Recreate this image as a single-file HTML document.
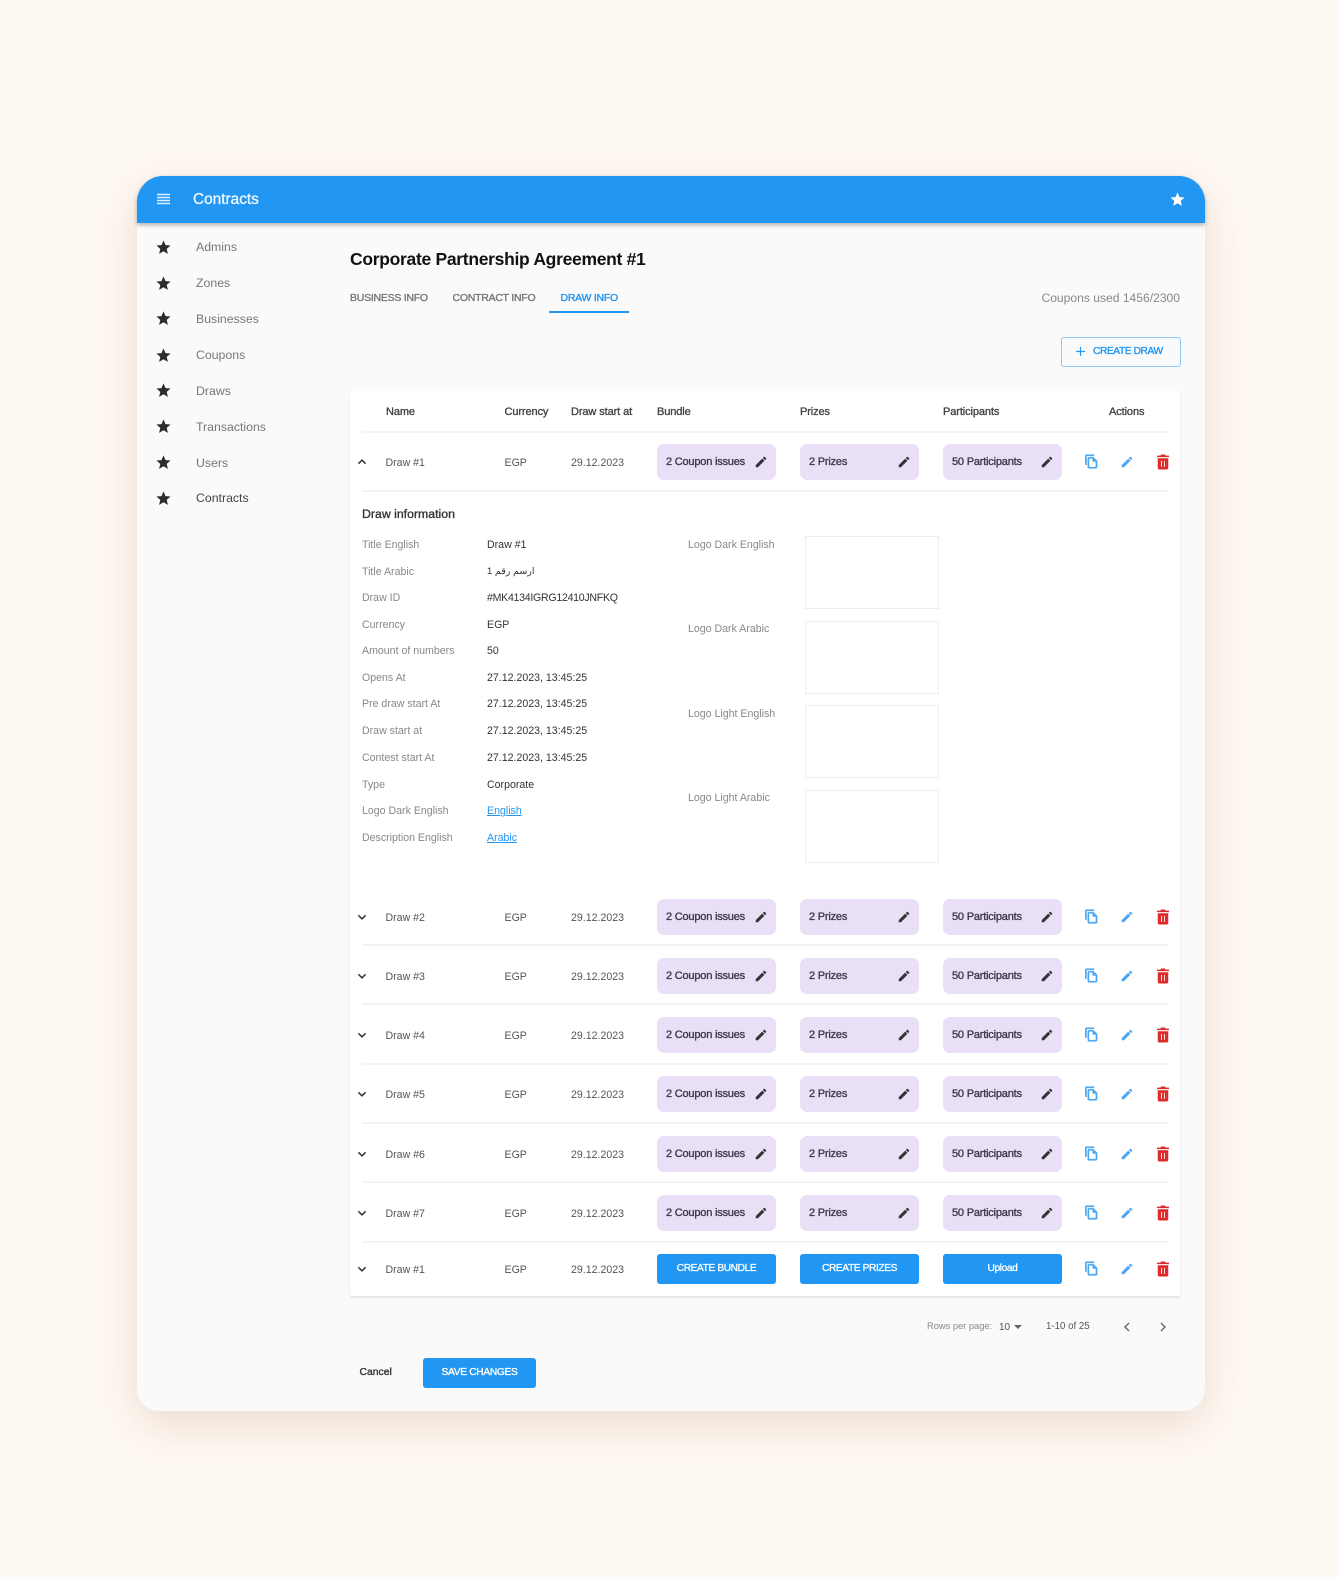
<!DOCTYPE html>
<html><head><meta charset="utf-8"><title>Contracts</title>
<style>
*{box-sizing:border-box}
html,body{margin:0;padding:0}
body{width:1340px;height:1577px;background:#fff9f4;position:relative;overflow:hidden;font-family:"Liberation Sans","DejaVu Sans",sans-serif;color:#424242}
.a,.r>*,.w>*{position:absolute;white-space:nowrap}
.win{position:absolute;left:137px;top:176px;width:1068px;height:1235px;background:#fafafa;border-radius:26px 26px 22px 22px;box-shadow:0 14px 46px rgba(150,95,45,.19)}
.bar{position:absolute;left:137px;top:176px;width:1068px;height:47px;background:#2196f3;border-radius:26px 26px 0 0;box-shadow:0 2px 4px rgba(0,0,0,.3)}
.nav{font-size:12.3px;line-height:16px;color:#777}
.m{-webkit-text-stroke:.35px currentColor}
.tab{font-size:10.5px;line-height:14px;-webkit-text-stroke:.35px currentColor;color:#777;letter-spacing:-.25px;top:291px}
.tbl{position:absolute;left:350px;top:391px;width:830px;height:905px;background:#fff;border-radius:2px;box-shadow:0 2px 2px rgba(0,0,0,.09)}
.th{font-size:11px;line-height:14px;letter-spacing:-.1px;-webkit-text-stroke:.35px currentColor;color:#444;top:405px}
.ln{position:absolute;left:362px;width:807px;height:2px;background:#f3f3f3}
.r{position:absolute;left:0;width:1340px;height:36px}
.t{font-size:10.6px;line-height:36px;top:1px;color:#555}
.c{top:0;height:36px;width:119px;background:#e9dff7;border-radius:7px;font-size:11px;letter-spacing:-.2px;-webkit-text-stroke:.35px currentColor;line-height:37px;color:#3c3a4c;padding-left:9px}
.b{top:3px;height:30px;width:119px;background:#2196f3;border-radius:3px;font-size:10.2px;letter-spacing:-.4px;-webkit-text-stroke:.3px currentColor;line-height:30px;color:#fff;text-align:center}
svg{display:block}
.l{font-size:10.6px;line-height:14px;color:#888}
.v{font-size:10.6px;line-height:14px;color:#333}
.box{position:absolute;left:805px;width:134px;height:73px;background:#fff;border:1px solid #ededed}
a{color:#2196f3;text-decoration:underline}
</style></head><body>
<svg width="0" height="0" style="position:absolute"><defs>
<symbol id="star" viewBox="0 0 24 24"><path d="M12 17.27L18.18 21l-1.64-7.03L22 9.24l-7.19-.61L12 2 9.19 8.63 2 9.24l5.46 4.73L5.82 21z"/></symbol>
<symbol id="pen" viewBox="0 0 24 24"><path d="M3 17.25V21h3.75L17.81 9.94l-3.75-3.75L3 17.25zM20.71 7.04a.996.996 0 0 0 0-1.41l-2.34-2.34a.996.996 0 0 0-1.41 0l-1.83 1.83 3.75 3.75 1.83-1.83z"/></symbol>
<symbol id="copy" viewBox="0 0 24 24"><path stroke="#4aa6f5" stroke-width=".7" d="M16 1H4c-1.1 0-2 .9-2 2v14h2V3h12V1zm-1 4H8c-1.1 0-1.99.9-1.99 2L6 21c0 1.1.89 2 1.99 2H19c1.1 0 2-.9 2-2V11l-6-6zM8 21V7h6v5h5v9H8z"/></symbol>
<symbol id="del" viewBox="0 0 24 24"><path fill-rule="evenodd" d="M5 7h14v13c0 1.1-.9 2-2 2H7c-1.100 0-2-.9-2-2V7zm4.500 3.500v8h1.200v-8H9.500zm3.800 0v8h1.200v-8h-1.200zM20 3.500h-4.500l-1-1.500h-5l-1 1.500H4v2h16v-2z"/></symbol>
<symbol id="down" viewBox="0 0 12 12"><path d="M2.400 4.300L6 7.800l3.600-3.500" fill="none" stroke="#333" stroke-width="1.500"/></symbol>
<symbol id="up" viewBox="0 0 12 12"><path d="M2.400 7.700L6 4.200l3.600 3.500" fill="none" stroke="#333" stroke-width="1.500"/></symbol>
</defs></svg>

<div class="win"></div>
<div class="bar"></div>
<svg class="a" style="left:157px;top:193px" width="13" height="13" viewBox="0 0 13 13"><path d="M0 1.500h13M0 4.500h13M0 7.500h13M0 10.500h13" stroke="#fff" stroke-opacity=".85" stroke-width="1.500"/></svg>
<div class="a m" style="left:193px;top:191px;font-size:15.400px;line-height:18px;color:#fff;opacity:.92">Contracts</div>
<svg class="a" style="left:1169px;top:191px;fill:#fff" width="17" height="17"><use href="#star"/></svg>

<svg class="a" style="left:155px;top:239px;fill:#2c2c2c" width="17" height="17"><use href="#star"/></svg><div class="a nav" style="left:196px;top:239px">Admins</div>
<svg class="a" style="left:155px;top:275px;fill:#2c2c2c" width="17" height="17"><use href="#star"/></svg><div class="a nav" style="left:196px;top:275px">Zones</div>
<svg class="a" style="left:155px;top:310px;fill:#2c2c2c" width="17" height="17"><use href="#star"/></svg><div class="a nav" style="left:196px;top:311px">Businesses</div>
<svg class="a" style="left:155px;top:346.500px;fill:#2c2c2c" width="17" height="17"><use href="#star"/></svg><div class="a nav" style="left:196px;top:347px">Coupons</div>
<svg class="a" style="left:155px;top:382px;fill:#2c2c2c" width="17" height="17"><use href="#star"/></svg><div class="a nav" style="left:196px;top:383px">Draws</div>
<svg class="a" style="left:155px;top:418px;fill:#2c2c2c" width="17" height="17"><use href="#star"/></svg><div class="a nav" style="left:196px;top:419px">Transactions</div>
<svg class="a" style="left:155px;top:454px;fill:#2c2c2c" width="17" height="17"><use href="#star"/></svg><div class="a nav" style="left:196px;top:455px">Users</div>
<svg class="a" style="left:155px;top:489.500px;fill:#2c2c2c" width="17" height="17"><use href="#star"/></svg><div class="a nav" style="left:196px;top:490px;color:#444">Contracts</div>

<div class="a" style="left:350px;top:248px;font-size:17.500px;letter-spacing:-.3px;line-height:22px;font-weight:bold;color:#111">Corporate Partnership Agreement #1</div>
<div class="w">
<div class="tab" style="left:350px">BUSINESS INFO</div>
<div class="tab" style="left:452.500px">CONTRACT INFO</div>
<div class="tab" style="left:560.500px;color:#2196f3">DRAW INFO</div>
<div style="left:549px;top:311px;width:80px;height:2px;background:#2196f3"></div>
<div style="right:160px;top:290px;font-size:12.100px;line-height:16px;color:#888">Coupons used 1456/2300</div>
<div style="left:1061px;top:337px;width:120px;height:30px;border:1px solid #8cc8f8;border-radius:3px"></div>
<svg style="left:1075px;top:346px" width="11" height="11" viewBox="0 0 11 11"><path d="M5.500 1v9M1 5.500h9" stroke="#2196f3" stroke-width="1.200"/></svg>
<div class="m" style="left:1093px;top:345px;font-size:10.200px;letter-spacing:-.4px;line-height:14px;color:#2196f3">CREATE DRAW</div>
</div>

<div class="tbl"></div>
<div class="w">
<div class="th" style="left:386px">Name</div>
<div class="th" style="left:504.500px">Currency</div>
<div class="th" style="left:571px">Draw start at</div>
<div class="th" style="left:657px">Bundle</div>
<div class="th" style="left:800px">Prizes</div>
<div class="th" style="left:943px">Participants</div>
<div class="th" style="left:1109px">Actions</div>
</div>
<div class="ln" style="top:431px"></div>
<div class="ln" style="top:490px"></div>
<div class="ln" style="top:944px"></div>
<div class="ln" style="top:1003px"></div>
<div class="ln" style="top:1063px"></div>
<div class="ln" style="top:1122px"></div>
<div class="ln" style="top:1181px"></div>
<div class="ln" style="top:1241px"></div>

<div class="r" style="top:444px"><svg style="left:356px;top:12px" width="12" height="12"><use href="#up"/></svg><div class="t" style="left:385.500px">Draw #1</div><div class="t" style="left:504.500px">EGP</div><div class="t" style="left:571px">29.12.2023</div><div class="c" style="left:657px">2 Coupon issues<svg style="position:absolute;left:96.500px;top:11px;fill:#333" width="14" height="14"><use href="#pen"/></svg></div><div class="c" style="left:800px">2 Prizes<svg style="position:absolute;left:96.500px;top:11px;fill:#333" width="14" height="14"><use href="#pen"/></svg></div><div class="c" style="left:943px">50 Participants<svg style="position:absolute;left:96.500px;top:11px;fill:#333" width="14" height="14"><use href="#pen"/></svg></div><svg style="left:1084px;top:10px;fill:#4aa6f5" width="15" height="15"><use href="#copy"/></svg><svg style="left:1120px;top:11px;fill:#4aa6f5" width="14" height="14"><use href="#pen"/></svg><svg style="left:1154px;top:9px;fill:#dc2b2b" width="18" height="18"><use href="#del"/></svg></div>

<div class="a m" style="left:362px;top:506px;font-size:12.300px;line-height:16px;color:#333">Draw information</div>
<div class="w">
<div class="l" style="left:362px;top:538px">Title English</div><div class="v" style="left:487px;top:538px">Draw #1</div>
<div class="l" style="left:362px;top:565px">Title Arabic</div><div class="v" style="left:487px;top:565px;font-size:9.500px" dir="rtl">ارسم رقم 1</div>
<div class="l" style="left:362px;top:591px">Draw ID</div><div class="v" style="left:487px;top:591px;letter-spacing:-.28px">#MK4134IGRG12410JNFKQ</div>
<div class="l" style="left:362px;top:618px">Currency</div><div class="v" style="left:487px;top:618px">EGP</div>
<div class="l" style="left:362px;top:644px">Amount of numbers</div><div class="v" style="left:487px;top:644px">50</div>
<div class="l" style="left:362px;top:671px">Opens At</div><div class="v" style="left:487px;top:671px">27.12.2023, 13:45:25</div>
<div class="l" style="left:362px;top:697px">Pre draw start At</div><div class="v" style="left:487px;top:697px">27.12.2023, 13:45:25</div>
<div class="l" style="left:362px;top:724px">Draw start at</div><div class="v" style="left:487px;top:724px">27.12.2023, 13:45:25</div>
<div class="l" style="left:362px;top:751px">Contest start At</div><div class="v" style="left:487px;top:751px">27.12.2023, 13:45:25</div>
<div class="l" style="left:362px;top:778px">Type</div><div class="v" style="left:487px;top:778px">Corporate</div>
<div class="l" style="left:362px;top:804px">Logo Dark English</div><div class="v" style="left:487px;top:804px"><a>English</a></div>
<div class="l" style="left:362px;top:831px">Description English</div><div class="v" style="left:487px;top:831px"><a>Arabic</a></div>
<div class="l" style="left:688px;top:538px">Logo Dark English</div>
<div class="l" style="left:688px;top:622px">Logo Dark Arabic</div>
<div class="l" style="left:688px;top:707px">Logo Light English</div>
<div class="l" style="left:688px;top:791px">Logo Light Arabic</div>
</div>
<div class="box" style="top:536px"></div>
<div class="box" style="top:621px"></div>
<div class="box" style="top:705px"></div>
<div class="box" style="top:790px"></div>

<div class="r" style="top:899px"><svg style="left:356px;top:12px" width="12" height="12"><use href="#down"/></svg><div class="t" style="left:385.500px">Draw #2</div><div class="t" style="left:504.500px">EGP</div><div class="t" style="left:571px">29.12.2023</div><div class="c" style="left:657px">2 Coupon issues<svg style="position:absolute;left:96.500px;top:11px;fill:#333" width="14" height="14"><use href="#pen"/></svg></div><div class="c" style="left:800px">2 Prizes<svg style="position:absolute;left:96.500px;top:11px;fill:#333" width="14" height="14"><use href="#pen"/></svg></div><div class="c" style="left:943px">50 Participants<svg style="position:absolute;left:96.500px;top:11px;fill:#333" width="14" height="14"><use href="#pen"/></svg></div><svg style="left:1084px;top:10px;fill:#4aa6f5" width="15" height="15"><use href="#copy"/></svg><svg style="left:1120px;top:11px;fill:#4aa6f5" width="14" height="14"><use href="#pen"/></svg><svg style="left:1154px;top:9px;fill:#dc2b2b" width="18" height="18"><use href="#del"/></svg></div>

<div class="r" style="top:958px"><svg style="left:356px;top:12px" width="12" height="12"><use href="#down"/></svg><div class="t" style="left:385.500px">Draw #3</div><div class="t" style="left:504.500px">EGP</div><div class="t" style="left:571px">29.12.2023</div><div class="c" style="left:657px">2 Coupon issues<svg style="position:absolute;left:96.500px;top:11px;fill:#333" width="14" height="14"><use href="#pen"/></svg></div><div class="c" style="left:800px">2 Prizes<svg style="position:absolute;left:96.500px;top:11px;fill:#333" width="14" height="14"><use href="#pen"/></svg></div><div class="c" style="left:943px">50 Participants<svg style="position:absolute;left:96.500px;top:11px;fill:#333" width="14" height="14"><use href="#pen"/></svg></div><svg style="left:1084px;top:10px;fill:#4aa6f5" width="15" height="15"><use href="#copy"/></svg><svg style="left:1120px;top:11px;fill:#4aa6f5" width="14" height="14"><use href="#pen"/></svg><svg style="left:1154px;top:9px;fill:#dc2b2b" width="18" height="18"><use href="#del"/></svg></div>

<div class="r" style="top:1017px"><svg style="left:356px;top:12px" width="12" height="12"><use href="#down"/></svg><div class="t" style="left:385.500px">Draw #4</div><div class="t" style="left:504.500px">EGP</div><div class="t" style="left:571px">29.12.2023</div><div class="c" style="left:657px">2 Coupon issues<svg style="position:absolute;left:96.500px;top:11px;fill:#333" width="14" height="14"><use href="#pen"/></svg></div><div class="c" style="left:800px">2 Prizes<svg style="position:absolute;left:96.500px;top:11px;fill:#333" width="14" height="14"><use href="#pen"/></svg></div><div class="c" style="left:943px">50 Participants<svg style="position:absolute;left:96.500px;top:11px;fill:#333" width="14" height="14"><use href="#pen"/></svg></div><svg style="left:1084px;top:10px;fill:#4aa6f5" width="15" height="15"><use href="#copy"/></svg><svg style="left:1120px;top:11px;fill:#4aa6f5" width="14" height="14"><use href="#pen"/></svg><svg style="left:1154px;top:9px;fill:#dc2b2b" width="18" height="18"><use href="#del"/></svg></div>

<div class="r" style="top:1076px"><svg style="left:356px;top:12px" width="12" height="12"><use href="#down"/></svg><div class="t" style="left:385.500px">Draw #5</div><div class="t" style="left:504.500px">EGP</div><div class="t" style="left:571px">29.12.2023</div><div class="c" style="left:657px">2 Coupon issues<svg style="position:absolute;left:96.500px;top:11px;fill:#333" width="14" height="14"><use href="#pen"/></svg></div><div class="c" style="left:800px">2 Prizes<svg style="position:absolute;left:96.500px;top:11px;fill:#333" width="14" height="14"><use href="#pen"/></svg></div><div class="c" style="left:943px">50 Participants<svg style="position:absolute;left:96.500px;top:11px;fill:#333" width="14" height="14"><use href="#pen"/></svg></div><svg style="left:1084px;top:10px;fill:#4aa6f5" width="15" height="15"><use href="#copy"/></svg><svg style="left:1120px;top:11px;fill:#4aa6f5" width="14" height="14"><use href="#pen"/></svg><svg style="left:1154px;top:9px;fill:#dc2b2b" width="18" height="18"><use href="#del"/></svg></div>

<div class="r" style="top:1135.500px"><svg style="left:356px;top:12px" width="12" height="12"><use href="#down"/></svg><div class="t" style="left:385.500px">Draw #6</div><div class="t" style="left:504.500px">EGP</div><div class="t" style="left:571px">29.12.2023</div><div class="c" style="left:657px">2 Coupon issues<svg style="position:absolute;left:96.500px;top:11px;fill:#333" width="14" height="14"><use href="#pen"/></svg></div><div class="c" style="left:800px">2 Prizes<svg style="position:absolute;left:96.500px;top:11px;fill:#333" width="14" height="14"><use href="#pen"/></svg></div><div class="c" style="left:943px">50 Participants<svg style="position:absolute;left:96.500px;top:11px;fill:#333" width="14" height="14"><use href="#pen"/></svg></div><svg style="left:1084px;top:10px;fill:#4aa6f5" width="15" height="15"><use href="#copy"/></svg><svg style="left:1120px;top:11px;fill:#4aa6f5" width="14" height="14"><use href="#pen"/></svg><svg style="left:1154px;top:9px;fill:#dc2b2b" width="18" height="18"><use href="#del"/></svg></div>

<div class="r" style="top:1195px"><svg style="left:356px;top:12px" width="12" height="12"><use href="#down"/></svg><div class="t" style="left:385.500px">Draw #7</div><div class="t" style="left:504.500px">EGP</div><div class="t" style="left:571px">29.12.2023</div><div class="c" style="left:657px">2 Coupon issues<svg style="position:absolute;left:96.500px;top:11px;fill:#333" width="14" height="14"><use href="#pen"/></svg></div><div class="c" style="left:800px">2 Prizes<svg style="position:absolute;left:96.500px;top:11px;fill:#333" width="14" height="14"><use href="#pen"/></svg></div><div class="c" style="left:943px">50 Participants<svg style="position:absolute;left:96.500px;top:11px;fill:#333" width="14" height="14"><use href="#pen"/></svg></div><svg style="left:1084px;top:10px;fill:#4aa6f5" width="15" height="15"><use href="#copy"/></svg><svg style="left:1120px;top:11px;fill:#4aa6f5" width="14" height="14"><use href="#pen"/></svg><svg style="left:1154px;top:9px;fill:#dc2b2b" width="18" height="18"><use href="#del"/></svg></div>

<div class="r" style="top:1251px"><svg style="left:356px;top:12px" width="12" height="12"><use href="#down"/></svg><div class="t" style="left:385.500px">Draw #1</div><div class="t" style="left:504.500px">EGP</div><div class="t" style="left:571px">29.12.2023</div><div class="b" style="left:657px">CREATE BUNDLE</div><div class="b" style="left:800px">CREATE PRIZES</div><div class="b" style="left:943px">Upload</div><svg style="left:1084px;top:10px;fill:#4aa6f5" width="15" height="15"><use href="#copy"/></svg><svg style="left:1120px;top:11px;fill:#4aa6f5" width="14" height="14"><use href="#pen"/></svg><svg style="left:1154px;top:9px;fill:#dc2b2b" width="18" height="18"><use href="#del"/></svg></div>

<div class="w">
<div style="left:927px;top:1320px;font-size:9.300px;line-height:13px;color:#888">Rows per page:</div>
<div style="left:999px;top:1321px;font-size:10px;line-height:14px;color:#555">10</div>
<svg style="left:1014px;top:1325px" width="8" height="4" viewBox="0 0 8 4"><path d="M0 0h8L4 4z" fill="#666"/></svg>
<div style="left:1046px;top:1320px;font-size:9.700px;line-height:13px;color:#555">1-10 of 25</div>
<svg style="left:1121px;top:1321px" width="12" height="12"><path d="M8 2L4 6l4 4" fill="none" stroke="#666" stroke-width="1.400"/></svg>
<svg style="left:1157px;top:1321px" width="12" height="12"><path d="M4 2l4 4-4 4" fill="none" stroke="#666" stroke-width="1.400"/></svg>
<div class="m" style="left:359.500px;top:1366px;font-size:10.400px;line-height:14px;color:#333">Cancel</div>
<div class="m" style="left:423px;top:1358px;width:113px;height:30px;background:#2196f3;border-radius:3px;font-size:10.200px;letter-spacing:-.3px;line-height:30px;color:#fff;text-align:center">SAVE CHANGES</div>
</div>
</body></html>
